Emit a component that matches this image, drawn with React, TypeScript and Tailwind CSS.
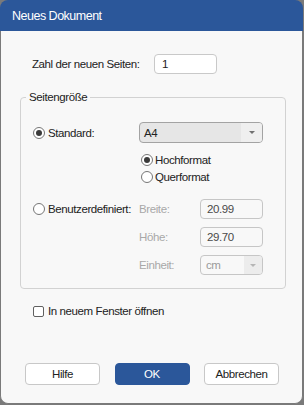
function Radio({ checked }: { checked?: boolean }) {
  return (
    <span className="grid size-[12px] shrink-0 place-items-center rounded-full border border-[#767676] bg-white">
      {checked && <span className="size-[6px] rounded-full bg-[#3a3a3a]" />}
    </span>
  )
}

function Arrow({ dim }: { dim?: boolean }) {
  return (
    <span
      className={`h-0 w-0 border-x-[3px] border-t-[3px] border-x-transparent ${
        dim ? 'border-t-[#b5b5b5]' : 'border-t-[#707070]'
      }`}
    />
  )
}

function Field({ value }: { value: string }) {
  return (
    <div className="flex h-[20px] w-[63px] items-center rounded-[4px] border border-[#c6c6c6] bg-[#f8f8f8] px-[6px] text-[#4a4a4a]">
      {value}
    </div>
  )
}

export default function App() {
  return (
    <div className="h-[405px] w-[304px] bg-[#7a7a7a] font-['Liberation_Sans',Arial,sans-serif] text-[11.5px] leading-[16px] tracking-[-0.4px] text-[#222]">
      <div className="flex h-[404px] w-[303px] flex-col overflow-hidden rounded-[8px]">
        <div className="flex h-[31px] shrink-0 items-center bg-[#2b579a] px-[12px] text-[12.5px] tracking-[-0.5px] text-white">
          Neues Dokument
        </div>

        <div className="flex flex-1 flex-col rounded-b-[8px] border-x border-b border-[#7a7a7a] bg-[#f8f8f8]">
          <div className="mt-[23px] flex h-[20px] items-center pl-[31px]">
            <span className="w-[122px]">Zahl der neuen Seiten:</span>
            <div className="flex h-[20px] w-[63px] items-center rounded-[4px] border border-[#c9c9c9] bg-white px-[7px]">
              1
            </div>
          </div>

          <fieldset className="ml-[19px] mt-[16px] w-[266px] rounded-[4px] border border-[#d2d2d2] pb-[13px] pl-[12px] pt-[18px]">
            <legend className="-ml-[7px] px-[3px] leading-[14px]">Seitengröße</legend>

            <div className="flex h-[21px] items-center">
              <div className="flex w-[106px] items-center gap-[3px]">
                <Radio checked />
                <span>Standard:</span>
              </div>
              <div className="flex h-[21px] w-[124px] overflow-hidden rounded-[4px] border border-[#a3a3a3] bg-[#e6e6e6]">
                <span className="flex flex-1 items-center px-[4px]">A4</span>
                <span className="flex w-[21px] items-center justify-center bg-[#efefef]">
                  <Arrow />
                </span>
              </div>
            </div>

            <div className="ml-[108px] mt-[9px] flex h-[16px] items-center gap-[2px]">
              <Radio checked />
              <span>Hochformat</span>
            </div>
            <div className="ml-[108px] mt-[1px] flex h-[16px] items-center gap-[2px]">
              <Radio />
              <span>Querformat</span>
            </div>

            <div className="mt-[14px] flex h-[20px] items-center">
              <div className="flex w-[106px] items-center gap-[3px]">
                <Radio />
                <span>Benutzerdefiniert:</span>
              </div>
              <span className="w-[61px] text-[#a8a8a8]">Breite:</span>
              <Field value="20.99" />
            </div>
            <div className="mt-[8px] flex h-[20px] items-center pl-[106px]">
              <span className="w-[61px] text-[#a8a8a8]">Höhe:</span>
              <Field value="29.70" />
            </div>
            <div className="mt-[8px] flex h-[20px] items-center pl-[106px]">
              <span className="w-[61px] text-[#a8a8a8]">Einheit:</span>
              <div className="flex h-[20px] w-[63px] overflow-hidden rounded-[4px] border border-[#c6c6c6] bg-[#f8f8f8]">
                <span className="flex flex-1 items-center px-[5px] text-[#9a9a9a]">cm</span>
                <span className="flex w-[18px] items-center justify-center bg-[#ececec]">
                  <Arrow dim />
                </span>
              </div>
            </div>
          </fieldset>

          <div className="mt-[14px] flex h-[16px] items-center gap-[4px] pl-[32px]">
            <span className="size-[11px] rounded-[2px] border border-[#606060] bg-white" />
            <span>In neuem Fenster öffnen</span>
          </div>

          <div className="mb-[18px] mt-auto flex items-center justify-between pl-[24px] pr-[23px]">
            <button className="h-[22px] w-[75px] rounded-[4px] border border-[#c8c8c8] bg-white">Hilfe</button>
            <button className="h-[22px] w-[75px] rounded-[4px] border border-[#2b579a] bg-[#2b579a] text-white">
              OK
            </button>
            <button className="h-[22px] w-[75px] rounded-[4px] border border-[#c8c8c8] bg-white">Abbrechen</button>
          </div>
        </div>
      </div>
    </div>
  )
}
